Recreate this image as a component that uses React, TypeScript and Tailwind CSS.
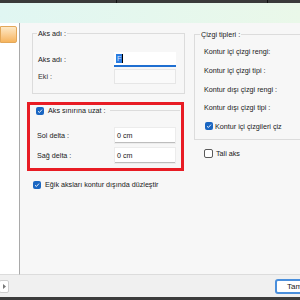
import React from "react";

const font = { fontFamily: '"Liberation Sans", Arial, sans-serif' };

function Check({ checked }: { checked: boolean }) {
  return checked ? (
    <div className="w-[8px] h-[8px] shrink-0 rounded-[2px] bg-[#1a66c2] flex items-center justify-center">
      <svg width="6" height="6" viewBox="0 0 6 6">
        <path d="M1 3.2 L2.4 4.5 L5 1.6" stroke="#fff" strokeWidth="0.9" fill="none" />
      </svg>
    </div>
  ) : (
    <div className="w-[9px] h-[9px] shrink-0 rounded-[2px] border border-[#5a5a5a] bg-white" />
  );
}

function Input({ children, w, blue }: { children?: React.ReactNode; w: string; blue?: boolean }) {
  return (
    <div
      className={`${w} h-[15px] bg-white flex items-center pl-[2px] ${
        blue ? "border-b-2 border-[#1f6fd1]" : "border-b border-[#bdbdbd] shadow-[0_0_0_1px_#ececec]"
      }`}
    >
      {children}
    </div>
  );
}

export default function App() {
  return (
    <div
      className="w-[300px] h-[300px] overflow-hidden flex flex-col text-[7.2px] leading-[9px] text-[#1a1a1a] bg-[#f7f7f7]"
      style={font}
    >
      <div className="h-[3px] bg-[#3a3a3a] flex shrink-0">
        <div className="w-[116px]" />
        <div className="w-px bg-[#111]" />
        <div className="w-[150px]" />
        <div className="w-px bg-[#111]" />
      </div>
      <div className="h-[20px] shrink-0 bg-gradient-to-r from-[#e0f6f2] to-[#eaf8e9]" />

      <div className="flex-1 flex min-h-0">
        <div className="w-[20px] shrink-0 bg-white border-r border-[#a9a9a9] border-b border-b-[#dcdcdc] pt-[3px]">
          <div className="w-[17px] h-[17px] rounded-r-[2px] border border-[#e3a85a] bg-gradient-to-b from-[#fde9c6] to-[#f6b45c]" />
        </div>

        <div className="flex-1 flex pl-[7px] border-b border-[#dcdcdc]">
          <div className="w-[157px] shrink-0 flex flex-col">
            <div className="relative mt-[10px] ml-[5px] w-[153px] h-[61px] border border-[#dcdcdc] pt-[18px] pl-[5px]">
              <div className="absolute left-[4px] top-[-5px] px-[1px] bg-[#f7f7f7]">Aks adı :</div>
              <div className="grid grid-cols-[76px_62px] gap-y-[2px] items-center">
                <div>Aks adı :</div>
                <Input w="w-[62px]" blue>
                  <span className="bg-[#2a7be0] text-[#dfe9ff] px-[1px]">F</span>
                  <span className="w-px h-[9px] bg-black" />
                </Input>
                <div className="text-[#333]">Eki :</div>
                <div className="w-[62px] h-[15px] bg-[#fafafa] border border-[#e6e6e6]" />
              </div>
            </div>

            <div className="mt-[8px] w-[157px] h-[69px] border-[3px] border-[#e81c24] flex flex-col">
              <div className="flex items-center pl-[6px] pt-[1px] h-[9px] box-content">
                <Check checked />
                <span className="ml-[4px]">Aks sınırına uzat :</span>
                <div className="flex-1 h-px bg-[#dcdcdc] ml-[4px] mr-[1px]" />
              </div>
              <div className="grid grid-cols-[78px_60px] gap-y-[5px] items-center pl-[7px] mt-[13px]">
                <div>Sol delta :</div>
                <Input w="w-[60px]">0 cm</Input>
                <div>Sağ delta :</div>
                <Input w="w-[60px]">0 cm</Input>
              </div>
            </div>

            <div className="flex items-center mt-[9px] ml-[6px]">
              <Check checked />
              <span className="ml-[4px]">Eğik aksları kontur dışında düzleştir</span>
            </div>
          </div>

          <div className="ml-[10px] flex flex-col">
            <div className="relative mt-[11px] w-[120px] h-[106px] border border-[#dcdcdc] pl-[9px] pt-[7px]">
              <div className="absolute left-[5px] top-[-5px] px-[1px] bg-[#f7f7f7]">Çizgi tipleri :</div>
              <div className="h-[19px] flex items-center">Kontur içi çizgi rengi:</div>
              <div className="h-[19px] flex items-center">Kontur içi çizgi tipi :</div>
              <div className="h-[18px] flex items-center">Kontur dışı çizgi rengi :</div>
              <div className="h-[18px] flex items-center">Kontur dışı çizgi tipi :</div>
              <div className="h-[20px] flex items-center pl-[1px]">
                <Check checked />
                <span className="ml-[2px]">Kontur içi çizgileri çiz</span>
              </div>
            </div>
            <div className="flex items-center mt-[9px] ml-[10px]">
              <Check checked={false} />
              <span className="ml-[3px]">Tali aks</span>
            </div>
          </div>
        </div>
      </div>

      <div className="h-[22px] shrink-0 bg-[#f0f0f0] flex items-center justify-between">
        <div className="w-[10px] h-[13px] -ml-[1px] bg-white border border-[#cfcfcf] rounded-[2px] flex items-center pl-[3px]">
          <svg width="3" height="5" viewBox="0 0 3 5">
            <path d="M0 0 L3 2.5 L0 5 Z" fill="#777" />
          </svg>
        </div>
        <div className="w-[40px] h-[15px] mr-[-15px] bg-white border-2 border-[#4a8fdc] rounded-[3px] flex items-center pl-[10px] text-[8px]">
          Tamam
        </div>
      </div>
      <div className="h-[3px] shrink-0 bg-[#3c3c3c]" />
    </div>
  );
}
